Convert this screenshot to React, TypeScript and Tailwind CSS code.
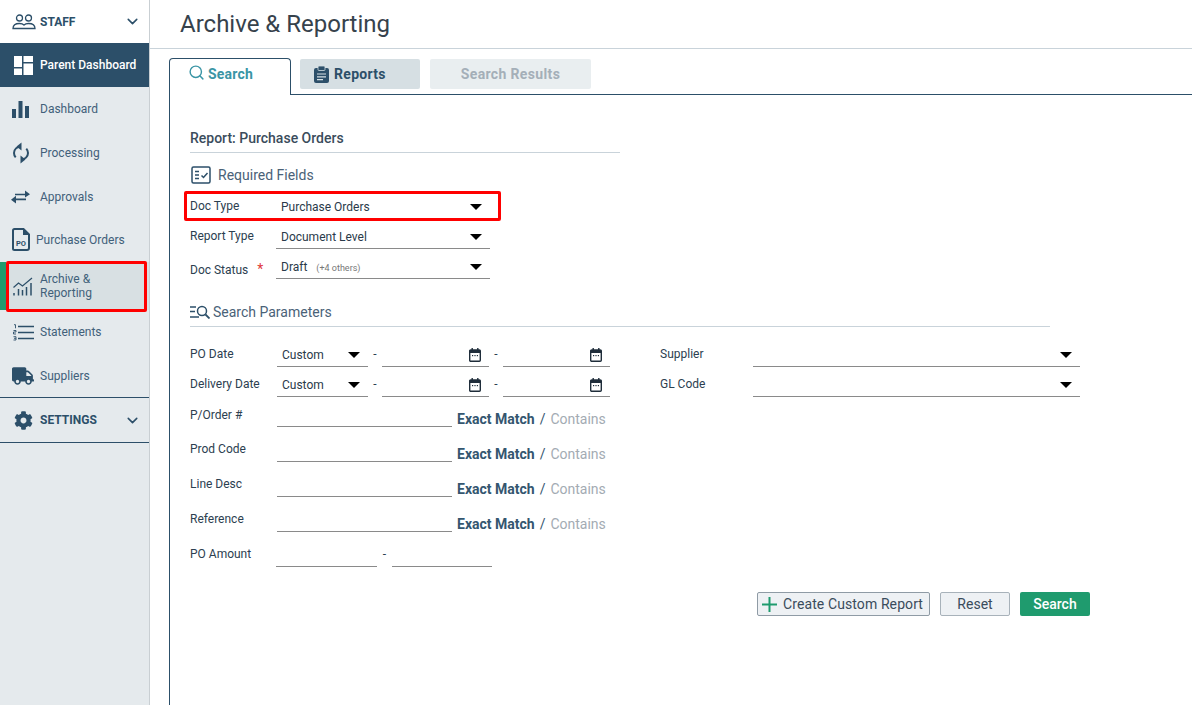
import { ChevronDown, Search } from 'lucide-react'
import { FaCog, FaTruck } from 'react-icons/fa'

const navy = '#2c4f69'

function StaffIcon() {
  return (
    <svg width="24" height="16" viewBox="0 0 24 16" fill="none" stroke={navy} strokeWidth="1.3">
      <circle cx="7.5" cy="4" r="3" />
      <circle cx="16.5" cy="4" r="3" />
      <path d="M1 14.5c0-3.5 2.500-5 6.500-5 2 0 3.500.5 4.500 1.500 1-1 2.500-1.500 4.500-1.500 4 0 6.500 1.500 6.500 5z" />
    </svg>
  )
}

function ParentIcon() {
  return (
    <svg width="19" height="19" viewBox="0 0 19 19" fill="#fff">
      <rect x="0" y="0" width="8" height="11" />
      <rect x="0" y="12.500" width="8" height="6.500" />
      <rect x="9.500" y="0" width="9.500" height="6" />
      <rect x="9.500" y="7.500" width="9.500" height="11.500" />
    </svg>
  )
}

function BarsIcon() {
  return (
    <svg width="17" height="17" viewBox="0 0 17 17" fill={navy}>
      <rect x="0" y="8" width="4" height="9" />
      <rect x="6.500" y="0" width="4" height="17" />
      <rect x="13" y="5" width="4" height="12" />
    </svg>
  )
}

function SyncIcon() {
  return (
    <svg width="18" height="22" viewBox="0 0 18 22" fill="none" stroke={navy} strokeWidth="2">
      <path d="M9 4.500c-4 0-7 2.800-7 6.500 0 1.700.6 3.200 1.700 4.400" />
      <path d="M9 17.500c4 0 7-2.800 7-6.500 0-1.700-.6-3.200-1.700-4.400" />
      <path d="M9.500 0.500v8L4.500 4.500z" fill={navy} stroke="none" />
      <path d="M8.500 21.500v-8l5 4z" fill={navy} stroke="none" />
    </svg>
  )
}

function SwapIcon() {
  return (
    <svg width="19" height="14" viewBox="0 0 19 14" fill={navy}>
      <path d="M4 3.700h10V0.500l5 3.800-5 3.200V5.300H4z" />
      <path d="M15 8.500H5V5.800l-5 4 5 3.700v-3.300h10z" />
    </svg>
  )
}

function PoIcon() {
  return (
    <svg width="18" height="23" viewBox="0 0 18 23" fill="none">
      <path d="M2.500 1h9L17 6.500V20a2 2 0 0 1-2 2H2.500a1.500 1.500 0 0 1-1.500-1.500v-18A1.500 1.500 0 0 1 2.500 1z" stroke={navy} strokeWidth="2" />
      <path d="M11 1v6h6z" fill={navy} />
      <text x="9" y="18" textAnchor="middle" fontSize="7.500" fontWeight="700" fontFamily="Roboto" fill={navy}>PO</text>
    </svg>
  )
}

function ChartIcon() {
  return (
    <svg width="20" height="19" viewBox="0 0 20 19" fill="none" stroke={navy} strokeWidth="1.200">
      <path d="M0.500 10.500l5-4.500 4 3L19 1" />
      <path d="M1 16v2.500M5.500 12v6.500M9.500 13v5.500M13.500 10v8.500M18 6v12.500" strokeWidth="1.500" />
    </svg>
  )
}

function StatementsIcon() {
  return (
    <svg width="21" height="17" viewBox="0 0 21 17" fill="none" stroke={navy} strokeWidth="1.500">
      <path d="M5 2.500h16M5 8.500h16M5 14.500h16" />
      <path d="M1 0.700h1.500v3.600M0.500 6.500h2.500v1.500H0.500v2h2.500M0.500 12.700h2.500v3.300H0.500M1 14.300h2" strokeWidth="0.900" />
    </svg>
  )
}

function ClipboardIcon() {
  return (
    <svg width="15" height="17" viewBox="0 0 15 17" className="shrink-0">
      <rect x="0" y="2" width="15" height="15" rx="2" fill={navy} />
      <rect x="4" y="0" width="7" height="4.500" rx="1" fill={navy} stroke="#d6dfe3" strokeWidth="0.800" />
      <path d="M3 8h9M3 10.800h9M3 13.600h6" stroke="#d6dfe3" strokeWidth="1.200" />
    </svg>
  )
}

function ChecklistIcon() {
  return (
    <svg width="20" height="18" viewBox="0 0 20 18" fill="none" stroke={navy}>
      <rect x="1" y="1" width="18" height="16" rx="1.500" strokeWidth="1.500" />
      <path d="M4 5.500h4M4 9h4M4 12.500h4" strokeWidth="1.500" />
      <path d="M10.500 9.500l2 2 4-4.500" strokeWidth="1.500" />
    </svg>
  )
}

function ParamsIcon() {
  return (
    <svg width="20" height="14" viewBox="0 0 20 14" fill="none" stroke={navy}>
      <path d="M0 2h6M0 6.500h5M0 12h9" strokeWidth="1.400" />
      <circle cx="12" cy="6" r="4.500" strokeWidth="1.500" />
      <path d="M15.500 9.500l4 4" strokeWidth="1.800" />
    </svg>
  )
}

function CalendarIcon() {
  return (
    <svg width="12" height="14" viewBox="0 0 12 14" className="shrink-0">
      <rect x="0.700" y="2" width="10.600" height="11.300" rx="1" fill="none" stroke="#1f2d3a" strokeWidth="1.400" />
      <rect x="0.700" y="2" width="10.600" height="3" fill="#1f2d3a" />
      <rect x="2.500" y="0" width="1.400" height="3" fill="#1f2d3a" />
      <rect x="8.100" y="0" width="1.400" height="3" fill="#1f2d3a" />
      <rect x="3" y="7" width="1.200" height="1.200" fill="#1f2d3a" />
      <rect x="5.400" y="7" width="1.200" height="1.200" fill="#1f2d3a" />
      <rect x="7.800" y="7" width="1.200" height="1.200" fill="#1f2d3a" />
    </svg>
  )
}

function Caret() {
  return <span className="h-0 w-0 shrink-0 border-x-[6px] border-t-[6px] border-x-transparent border-t-black" />
}

function NavItem({ icon, label }: { icon: React.ReactNode; label: string }) {
  return (
    <div className="flex h-11 items-center text-[12px] text-[#41607a]">
      <span className="flex w-10 shrink-0 justify-center pl-1.5 pr-[5px]">{icon}</span>
      {label}
    </div>
  )
}

function Sidebar() {
  return (
    <aside className="flex w-[150px] shrink-0 flex-col border-r border-[#c9cfd3] bg-[#e5eaed]">
      <div className="flex h-[43px] items-center bg-white pl-3 pr-2 text-[12px] font-bold text-[#2c4f69]">
        <StaffIcon />
        <span className="ml-1 flex-1">STAFF</span>
        <ChevronDown size={17} strokeWidth={2.200} />
      </div>
      <div className="flex h-11 items-center bg-[#2c4f69] pl-3.5 text-[12px] font-medium text-white">
        <ParentIcon />
        <span className="ml-[7px]">Parent Dashboard</span>
      </div>
      <NavItem icon={<BarsIcon />} label="Dashboard" />
      <NavItem icon={<SyncIcon />} label="Processing" />
      <NavItem icon={<SwapIcon />} label="Approvals" />
      <div className="flex h-[43px] items-center pb-0.5 pl-3 text-[12px] text-[#41607a]">
        <PoIcon />
        <span className="ml-1.5">Purchase Orders</span>
      </div>
      <div className="relative flex h-12 items-center bg-[#d8e0e3] text-[12px] leading-[14px] text-[#41607a]">
        <span className="h-full w-1.5 shrink-0 bg-[#1f9b6e]" />
        <span className="flex w-[34px] shrink-0 justify-center"><ChartIcon /></span>
        <span>Archive &<br />Reporting</span>
        <div className="absolute -top-px bottom-[-2px] left-1.5 right-0.5 rounded-[2px] border-[3px] border-[#ff0000]" />
      </div>
      <div className="flex h-11 items-center pl-[13px] text-[12px] text-[#41607a]">
        <StatementsIcon />
        <span className="ml-1.5">Statements</span>
      </div>
      <div className="flex h-11 items-center border-b border-[#2c4f69] pl-3 text-[12px] text-[#41607a]">
        <FaTruck size={22} color={navy} />
        <span className="ml-1.5">Suppliers</span>
      </div>
      <div className="flex h-[45px] items-center border-b border-[#2c4f69] pl-3.5 pr-2 text-[12px] font-bold text-[#2c4f69]">
        <FaCog size={19} color={navy} />
        <span className="ml-[7px] flex-1">SETTINGS</span>
        <ChevronDown size={17} strokeWidth={2.200} />
      </div>
    </aside>
  )
}

function SelectLine({ width, value, extra }: { width: string; value: string; extra?: string }) {
  return (
    <div className={`flex h-6 items-center border-b border-[#8a8a8a] pl-[5px] pr-2 text-[12px] text-[#2a3a4a] ${width}`}>
      <span className="flex-1">
        {value}
        {extra && <span className="ml-[9px] text-[9px] text-[#777]">{extra}</span>}
      </span>
      <Caret />
    </div>
  )
}

function RequiredRow({ label, value, extra, star }: { label: string; value: string; extra?: string; star?: boolean }) {
  return (
    <div className="flex h-[30px] items-end">
      <span className={`w-[86px] text-[12px] text-[#2c4050] ${star ? '-mb-px' : 'pb-1'}`}>
        {label}
        {star && <span className="ml-[9px] text-[14px] text-[#e03a3a]">*</span>}
      </span>
      <SelectLine width="w-[214px]" value={value} extra={extra} />
    </div>
  )
}

function DateRow({ label, right }: { label: string; right: string }) {
  return (
    <div className="flex h-[30px] items-end">
      <span className="w-[87px] pb-1 text-[12px] text-[#2c4050]">{label}</span>
      <SelectLine width="w-[91px]" value="Custom" />
      <span className="w-[14px] pb-1 text-center text-[12px] text-[#2c4050]">-</span>
      <div className="flex h-6 w-[107px] items-center justify-end border-b border-[#8a8a8a] pr-2"><CalendarIcon /></div>
      <span className="w-[14px] pb-1 text-center text-[12px] text-[#2c4050]">-</span>
      <div className="flex h-6 w-[107px] items-center justify-end border-b border-[#8a8a8a] pr-2"><CalendarIcon /></div>
      <span className="w-[143px] whitespace-nowrap pb-1 pl-[50px] text-[12px] text-[#2c4050]">{right}</span>
      <SelectLine width="w-[327px]" value="" />
    </div>
  )
}

function MatchRow({ label, tall }: { label: string; tall?: boolean }) {
  return (
    <div className={`flex items-end ${tall ? 'h-[35px]' : 'h-[30px]'}`}>
      <span className={`w-[87px] self-start text-[12px] leading-[14px] text-[#2c4050] ${tall ? 'pt-[15px]' : 'pt-[11px]'}`}>{label}</span>
      <div className="h-6 w-[175px] border-b border-[#8a8a8a]" />
      <span className="ml-[5px] pb-px text-[14px] font-bold leading-[14px] text-[#34566f]">Exact Match</span>
      <span className="ml-[5px] mr-[5px] pb-px text-[14px] leading-[14px] text-[#34566f]">/</span>
      <span className="pb-px text-[14px] leading-[14px] text-[#a3abb3]">Contains</span>
    </div>
  )
}

export default function App() {
  return (
    <div className="flex h-[705px] w-[1192px] overflow-hidden bg-white" style={{ fontFamily: 'Roboto, sans-serif' }}>
      <Sidebar />
      <main className="flex min-w-0 flex-1 flex-col">
        <div className="h-[49px] border-b border-[#c9d3da] pl-[30px] pt-[7px] text-[24px] leading-[34px] text-[#36424c]">
          Archive & Reporting
        </div>
        <div className="flex h-[46px] items-end pl-[19px]">
          <div className="flex h-[37px] w-[122px] items-start rounded-t-[4px] border border-b-0 border-[#2c4f69] bg-white pl-[18px] pt-[5px] text-[14px] font-bold tracking-[0.2px] text-[#3a95a5]">
            <Search size={17} strokeWidth={2} />
            <span className="ml-[3px]">Search</span>
          </div>
          <div className="flex h-[37px] flex-1 items-start border-b border-[#2c4f69] pl-[9px] pt-px">
            <div className="flex h-[30px] w-[120px] items-center rounded-[2px] bg-[#d6dfe3] pl-3.5 pt-px text-[14px] font-bold tracking-[0.3px] text-[#2c4f69]">
              <ClipboardIcon />
              <span className="ml-[5px]">Reports</span>
            </div>
            <div className="ml-2.5 flex h-[30px] w-[161px] items-center justify-center rounded-[2px] bg-[#e9eef0] pt-px text-[14px] font-bold tracking-[0.35px] text-[#a4afb8]">
              Search Results
            </div>
          </div>
        </div>
        <div className="ml-[19px] flex-1 border-l border-[#2c4f69] pl-5 pt-[35px]">
          <div className="w-[430px] border-b border-[#c9d3da] pb-1.5 text-[14px] font-medium leading-[16px] text-[#3a4c5c]">
            Report: Purchase Orders
          </div>
          <div className="mt-[12px] flex h-[20px] items-center pl-px text-[14px] text-[#4a6278]">
            <ChecklistIcon />
            <span className="ml-[7px]">Required Fields</span>
          </div>
          <div className="relative mt-[4px] w-[300px]">
            <RequiredRow label="Doc Type" value="Purchase Orders" />
            <RequiredRow label="Report Type" value="Document Level" />
            <RequiredRow label="Doc Status" value="Draft" extra="(+4 others)" star />
            <div className="absolute -left-1.5 top-0.5 h-[30px] w-[317px] rounded-[2px] border-[3px] border-[#ff0000]" />
          </div>
          <div className="mt-[25px] flex w-[860px] items-center border-b border-[#c9d3da] pb-[6px] text-[14px] leading-[16px] text-[#4a6278]">
            <ParamsIcon />
            <span className="ml-[3px]">Search Parameters</span>
          </div>
          <div className="mt-[10px]">
            <DateRow label="PO Date" right="Supplier" />
            <DateRow label="Delivery Date" right="GL Code" />
            <MatchRow label="P/Order #" />
            <MatchRow label="Prod Code" tall />
            <MatchRow label="Line Desc" tall />
            <MatchRow label="Reference" tall />
            <div className="flex h-[35px] items-end">
              <span className="w-[86px] self-start pt-[15px] text-[12px] leading-[14px] text-[#2c4050]">PO Amount</span>
              <div className="h-6 w-[101px] border-b border-[#8a8a8a]" />
              <span className="w-[15px] pb-1 text-center text-[12px] text-[#2c4050]">-</span>
              <div className="h-6 w-[100px] border-b border-[#8a8a8a]" />
            </div>
          </div>
          <div className="mt-[25px] flex w-[900px] items-center justify-end">
            <button className="flex h-6 w-[173px] items-center rounded-[2px] border border-[#8f9ba5] bg-[#eef1f4] pl-[3px] text-[14px] tracking-[0.1px] text-[#3a4c5c]">
              <svg width="17" height="17" viewBox="0 0 17 17" stroke="#1f9b6e" strokeWidth="2"><path d="M8.500 1v15M1 8.500h15" /></svg>
              <span className="ml-[5px]">Create Custom Report</span>
            </button>
            <button className="ml-2.5 h-6 w-[70px] rounded-[2px] border border-[#a8b2ba] bg-[#eef1f4] text-[14px] text-[#3a4c5c]">Reset</button>
            <button className="ml-2.5 h-6 w-[70px] rounded-[2px] bg-[#1f9b6e] text-[14px] font-medium text-white">Search</button>
          </div>
        </div>
      </main>
    </div>
  )
}
